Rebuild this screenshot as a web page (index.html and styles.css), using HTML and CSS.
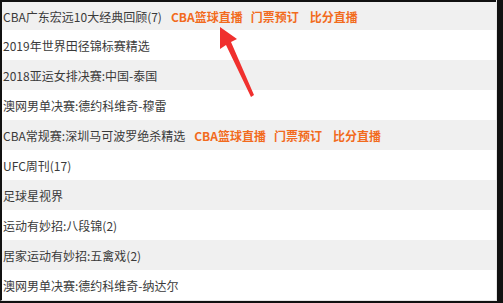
FILE: index.html
```html
<!DOCTYPE html>
<html>
<head>
<meta charset="utf-8">
<link rel="stylesheet" href="styles.css">
</head>
<body>
<div class="frame">
  <ul class="list">
    <li class="row odd first"><span class="title">CBA广东宏远10大经典回顾(7)</span><a class="tag">CBA篮球直播</a><a class="tag">门票预订</a><a class="tag last">比分直播</a></li>
    <li class="row"><span class="title">2019年世界田径锦标赛精选</span></li>
    <li class="row odd"><span class="title">2018亚运女排决赛:中国-泰国</span></li>
    <li class="row"><span class="title">澳网男单决赛:德约科维奇-穆雷</span></li>
    <li class="row odd"><span class="title">CBA常规赛:深圳马可波罗绝杀精选</span><a class="tag">CBA篮球直播</a><a class="tag">门票预订</a><a class="tag last">比分直播</a></li>
    <li class="row"><span class="title">UFC周刊(17)</span></li>
    <li class="row odd"><span class="title">足球星视界</span></li>
    <li class="row"><span class="title">运动有妙招:八段锦(2)</span></li>
    <li class="row odd"><span class="title">居家运动有妙招:五禽戏(2)</span></li>
    <li class="row"><span class="title">澳网男单决赛:德约科维奇-纳达尔</span></li>
  </ul>
  <svg class="arrow" width="60" height="80" viewBox="0 0 60 80">
    <polygon points="18,6 35,18 29,21 52,74 49,76 24,24 18,28" fill="#f0302e"/>
  </svg>
</div>
</body>
</html>
```

FILE: styles.css
```css
html, body {
  margin: 0;
  padding: 0;
  background: #111;
}
.frame {
  position: relative;
  width: 497px;
  height: 301px;
  margin: 0;
  border-left: 2px solid #111;
  border-right: 1px solid #e6e6e6;
  border-bottom: 1px solid #e6e6e6;
  background: #fff;
  box-sizing: border-box;
}
.list {
  list-style: none;
  margin: 0;
  padding: 0;
  border-top: 2px solid #111;
}
.row {
  height: 30px;
  display: flex;
  align-items: center;
  gap: 8px;
  padding-left: 1px;
  font-family: "Microsoft YaHei", "Noto Sans CJK SC", sans-serif;
  font-size: 12px;
  color: #3a3a3a;
  background: #fff;
  white-space: nowrap;
}
.row.first {
  height: 28px;
}
.row.odd {
  background: #f0f0f0;
}
.title {
  margin-right: 1px;
}
.tag {
  color: #f26b1d;
  font-weight: bold;
}
.tag.last {
  margin-left: 3px;
}
.arrow {
  position: absolute;
  left: 200px;
  top: 21px;
}
```
